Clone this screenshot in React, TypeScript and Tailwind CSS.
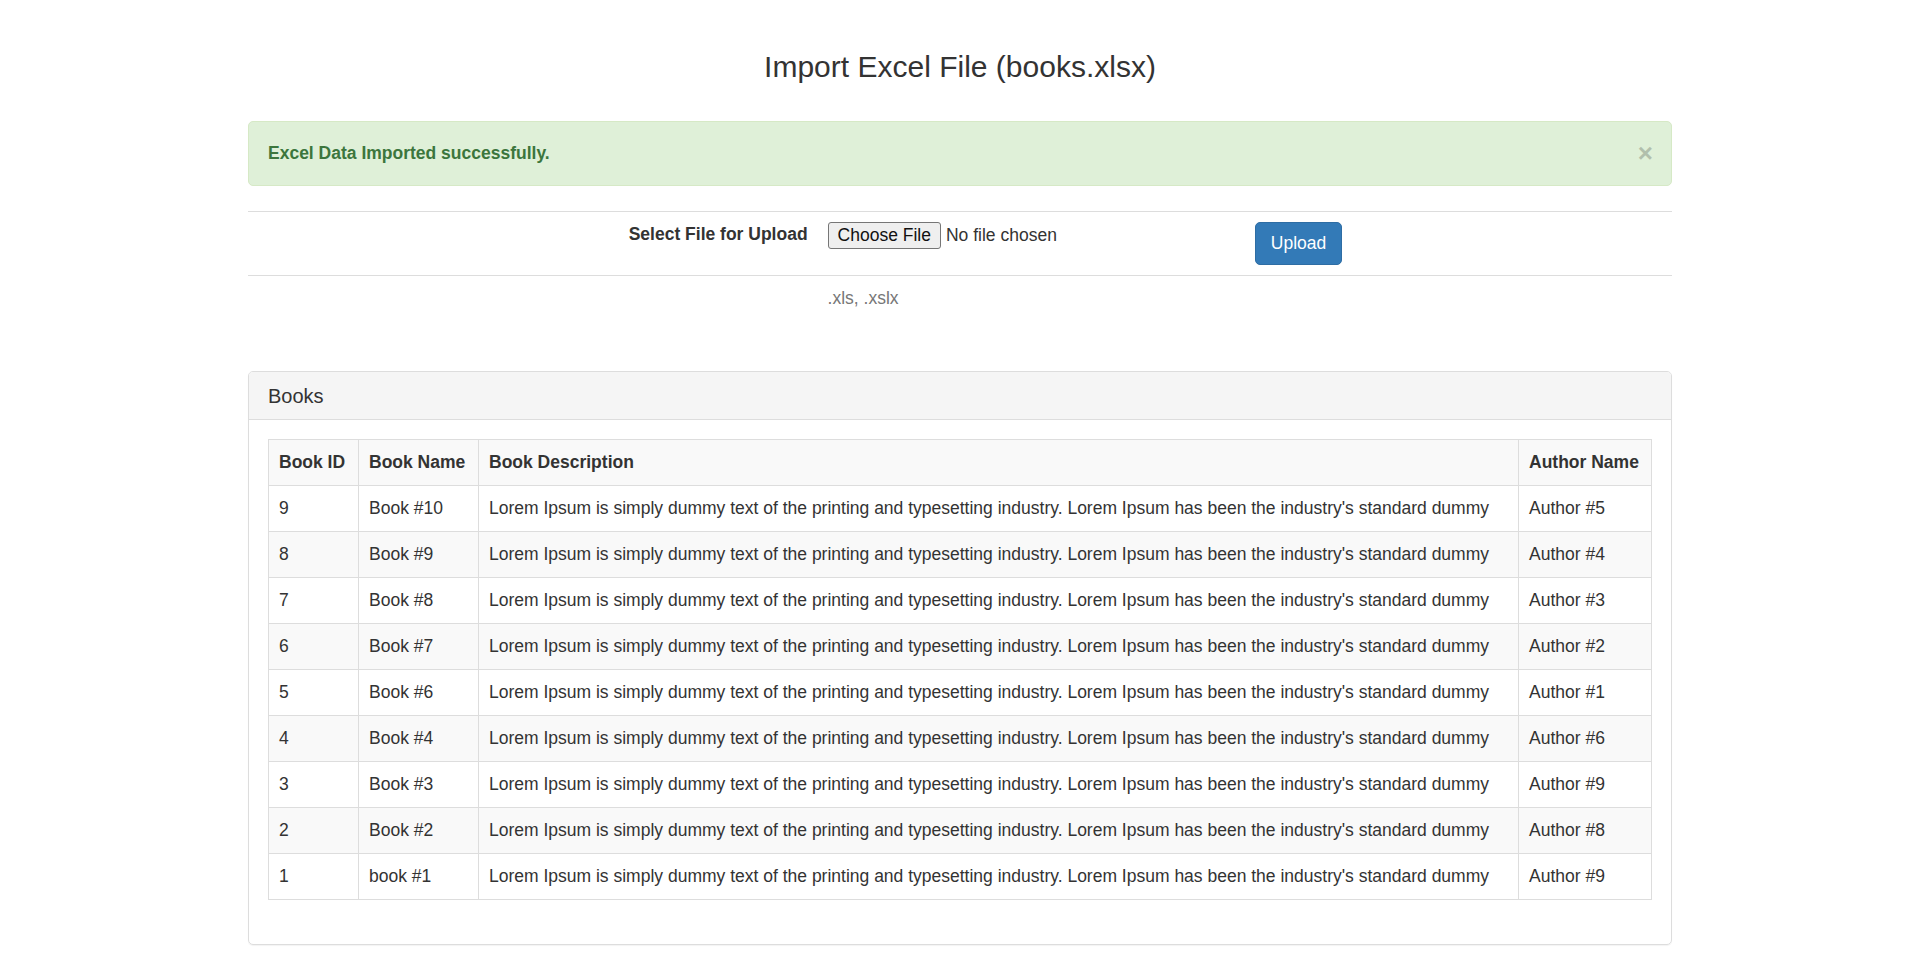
import React from 'react';

interface Book {
  id: number;
  name: string;
  author: string;
}

const DESCRIPTION =
  "Lorem Ipsum is simply dummy text of the printing and typesetting industry. Lorem Ipsum has been the industry's standard dummy";

const books: Book[] = [
  { id: 9, name: 'Book #10', author: 'Author #5' },
  { id: 8, name: 'Book #9', author: 'Author #4' },
  { id: 7, name: 'Book #8', author: 'Author #3' },
  { id: 6, name: 'Book #7', author: 'Author #2' },
  { id: 5, name: 'Book #6', author: 'Author #1' },
  { id: 4, name: 'Book #4', author: 'Author #6' },
  { id: 3, name: 'Book #3', author: 'Author #9' },
  { id: 2, name: 'Book #2', author: 'Author #8' },
  { id: 1, name: 'book #1', author: 'Author #9' },
];

const cell = 'border border-[#ddd] px-[10px] py-[10px] leading-[25px] whitespace-nowrap overflow-hidden align-top';

export default function App() {
  return (
    <div className="min-h-screen bg-white text-[#333] text-[17.5px] leading-[25px] font-['Liberation_Sans',Arial,sans-serif]">
      <div className="w-[1424px] mx-auto pt-[50px]">
        <h3 className="text-center text-[30px] leading-[33px] font-medium">Import Excel File (books.xlsx)</h3>

        {/* success message */}
        <div className="mt-[38px] flex items-center justify-between border border-[#d6e9c6] bg-[#dff0d8] text-[#3c763d] rounded-[5px] pl-[19px] pr-[18px] py-[19px]">
          <strong className="font-bold">Excel Data Imported successfully.</strong>
          <button type="button" className="text-[26px] font-bold leading-none text-black opacity-20 -mt-[2px]">
            ×
          </button>
        </div>

        {/* upload form */}
        <table className="mt-[25px] w-full border-collapse">
          <tbody>
            <tr>
              <td className="w-[40%] border-t border-[#ddd] p-[10px] align-top text-right">
                <label className="font-bold">Select File for Upload</label>
              </td>
              <td className="w-[30%] border-t border-[#ddd] p-[10px] align-top">
                <input
                  type="file"
                  className="block text-[17.5px] leading-[25px] text-[#333] file:mr-[5px] file:bg-[#efefef] file:border file:border-solid file:border-[#767676] file:rounded-[3px] file:px-[9px] file:py-0 file:text-[#111] file:leading-[25px]"
                />
              </td>
              <td className="w-[30%] border-t border-[#ddd] p-[10px] align-top">
                <button
                  type="button"
                  className="px-[15px] pt-[8px] pb-[8px] leading-[25px] bg-[#337ab7] border border-[#2e6da4] text-white rounded-[5px]"
                >
                  Upload
                </button>
              </td>
            </tr>
            <tr>
              <td className="border-t border-[#ddd] p-[10px]"></td>
              <td className="border-t border-[#ddd] p-[10px] text-[#777]">.xls, .xslx</td>
              <td className="border-t border-[#ddd] p-[10px]"></td>
            </tr>
          </tbody>
        </table>

        {/* books panel */}
        <div className="mt-[50px] mb-[25px] border border-[#ddd] rounded-[5px] shadow-[0_1px_1px_rgba(0,0,0,0.05)]">
          <div className="bg-[#f5f5f5] border-b border-[#ddd] rounded-t-[4px] px-[19px] py-[12.5px]">
            <h4 className="text-[20px] leading-[22px] font-medium">Books</h4>
          </div>
          <div className="p-[19px]">
            <table className="w-full table-fixed border-collapse mb-[25px]">
              <colgroup>
                <col className="w-[90px]" />
                <col className="w-[120px]" />
                <col className="w-[1040px]" />
                <col />
              </colgroup>
              <tbody>
                <tr className="bg-[#f9f9f9]">
                  <th className={`${cell} text-left font-bold`}>Book ID</th>
                  <th className={`${cell} text-left font-bold`}>Book Name</th>
                  <th className={`${cell} text-left font-bold`}>Book Description</th>
                  <th className={`${cell} text-left font-bold`}>Author Name</th>
                </tr>
                {books.map((b, i) => (
                  <tr key={b.id} className={i % 2 === 1 ? 'bg-[#f9f9f9]' : 'bg-white'}>
                    <td className={cell}>{b.id}</td>
                    <td className={cell}>{b.name}</td>
                    <td className={cell}>{DESCRIPTION}</td>
                    <td className={cell}>{b.author}</td>
                  </tr>
                ))}
              </tbody>
            </table>
          </div>
        </div>
      </div>
    </div>
  );
}
